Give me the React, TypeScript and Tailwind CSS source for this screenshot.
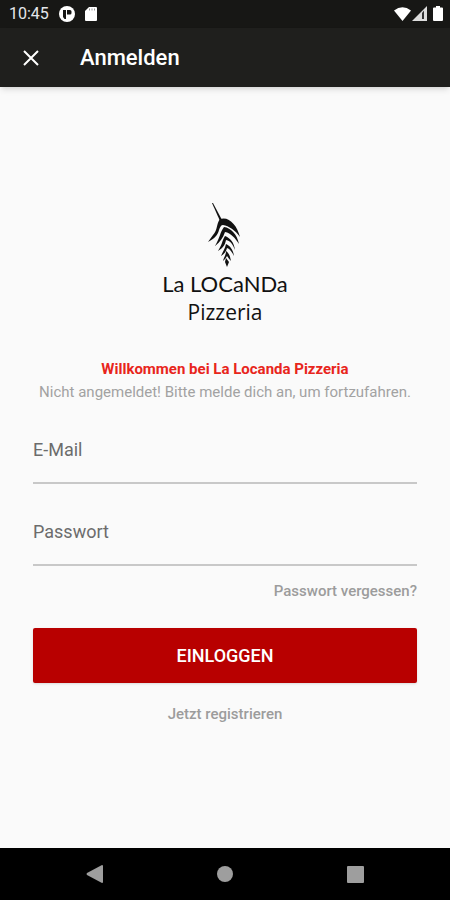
import React, { useState } from 'react';

const StatusBar: React.FC = () => (
    <div className="flex h-7 items-center justify-between bg-[#171715] pl-[9px] pr-[7px] text-white">
        <div className="flex items-center">
            <span className="text-base leading-5 text-gray-200">10:45</span>
            <svg className="ml-[10px] size-4" viewBox="0 0 16 16" aria-hidden="true">
                <circle cx="8" cy="8" r="8" fill="#fff" />
                <path d="M4 4h3v9H5.500L4 11zM8 4h3a1.500 1.500 0 0 1 1.500 1.500V7A1.500 1.500 0 0 1 11 8.500H8z" fill="#171715" />
            </svg>
            <svg className="ml-[10px] h-4 w-3" viewBox="0 0 12 16" aria-hidden="true">
                <path d="M4 1h7a1 1 0 0 1 1 1v12a1 1 0 0 1-1 1H1a1 1 0 0 1-1-1V5z" fill="#fff" />
                <path d="M4.500 2.500v2M7 2.500v2M9.500 2.500v2" stroke="#999" />
            </svg>
        </div>
        <div className="flex items-center">
            <svg className="h-4 w-[17px]" viewBox="0 0 17 16" aria-hidden="true">
                <path d="M0 4.500Q8.500-2 17 4.500L8.500 15z" fill="#fff" />
            </svg>
            <svg className="ml-px h-4 w-[15px]" viewBox="0 0 15 16" aria-hidden="true">
                <path d="M0 15 15 0v15z" fill="#ddd" />
                <path d="M10 7v6h2V4.500z" fill="#333" />
            </svg>
            <svg className="ml-[6px] h-4 w-[10px]" viewBox="0 0 10 16" aria-hidden="true">
                <path d="M3 0h4v1.500h2a1 1 0 0 1 1 1V14a1 1 0 0 1-1 1H1a1 1 0 0 1-1-1V2.500a1 1 0 0 1 1-1h2z" fill="#fff" />
            </svg>
        </div>
    </div>
);

const Logo: React.FC = () => (
    <div className="flex flex-col items-center text-[#111]">
        <svg className="h-[66px] w-[34px]" viewBox="0 0 34 66" aria-hidden="true" fill="currentColor">
            <path d="M4 1h1l9 17-2 1z" />
            <path d="M12 17C8 22 10 28 5 33l-5 7c6-3 10-7 11-12 1-3 2-5 4-5 6 1 12 5 17 12C29 23 21 14 12 17z" />
            <path d="M16 25c-4 5-4 11-9 19 5-4 8-8 10-14 6 1 10 6 14 12-2-10-8-16-15-17z" />
            <path d="M17 34c-3 5-3 9-7 15 5-3 7-6 8-11 5 1 7 5 9 10-1-8-5-12-10-14z" />
            <path d="M18 42c-1 5-3 7-5 12 3-2 5-4 6-8 3 1 5 4 7 8-1-7-4-10-8-12z" />
            <path d="M18 49c0 4-2 6-3 10 2-2 3-3 4-5 1 1 2 3 4 5-1-5-2-8-5-10zM18 56l-1 4 2 5 2-5z" />
        </svg>
        <h1 className="font-[Lato,sans-serif] text-[22px] leading-8">La LOCaNDa</h1>
        <p className="font-['Open_Sans',sans-serif] text-[21px] leading-6">Pizzeria</p>
    </div>
);

interface FieldProps {
    id: string;
    type: string;
    label: string;
    autoComplete: string;
}

const Field: React.FC<FieldProps> = ({ id, type, label, autoComplete }) => {
    const [value, setValue] = useState('');

    return (
        <div className="flex flex-col">
            <label htmlFor={id} className="text-lg leading-6 text-[#6c6c6c]">{label}</label>
            <input
                id={id}
                type={type}
                value={value}
                autoComplete={autoComplete}
                onChange={(e) => setValue(e.target.value)}
                className="h-[22px] w-full border-b-2 border-[#c8c8c8] bg-transparent text-base text-gray-900 outline-none"
            />
        </div>
    );
};

const App: React.FC = () => {
    const handleSubmit = (e: React.FormEvent) => {
        e.preventDefault();
    };

    return (
        <div className="flex min-h-screen flex-col bg-[#fafafa] font-[Roboto,sans-serif]">
            <StatusBar />
            <header className="z-10 flex h-[59px] items-center bg-[#1f1f1d] px-5 text-white shadow-md">
                <button type="button" aria-label="Schließen" className="flex size-[22px] items-center justify-center">
                    <svg className="size-4" viewBox="0 0 16 16" fill="none" stroke="currentColor" strokeWidth="2">
                        <path d="m1 1 14 14M15 1 1 15" />
                    </svg>
                </button>
                <h2 className="ml-[38px] text-[22px] leading-7 font-medium">Anmelden</h2>
            </header>

            <main className="flex flex-1 flex-col px-[33px] pt-[115px]">
                <Logo />
                <div className="mt-[34px] text-center text-[15px] leading-[23px]">
                    <p className="font-bold text-[#e8251c]">Willkommen bei La Locanda Pizzeria</p>
                    <p className="whitespace-nowrap text-[#a2a2a2]">Nicht angemeldet! Bitte melde dich an, um fortzufahren.</p>
                </div>

                <form onSubmit={handleSubmit} className="mt-[34px] flex flex-col">
                    <div className="flex flex-col gap-9">
                        <Field id="email" type="email" label="E-Mail" autoComplete="email" />
                        <Field id="password" type="password" label="Passwort" autoComplete="current-password" />
                    </div>
                    <a href="#" className="mt-[14px] self-end text-[15px] leading-[22px] font-medium text-[#9c9c9c]">Passwort vergessen?</a>
                    <button type="submit" className="mt-[26px] h-[55px] rounded-xs bg-[#b80000] text-lg font-medium text-white shadow">
                        EINLOGGEN
                    </button>
                </form>
                <a href="#" className="mt-5 self-center text-[15px] leading-[22px] font-medium text-[#9c9c9c]">Jetzt registrieren</a>
            </main>

            <nav className="flex h-[52px] items-center justify-center bg-black text-[#9e9e9e]">
                <button type="button" aria-label="Zurück" className="flex w-[130px] justify-center">
                    <svg className="size-[18px]" viewBox="0 0 18 18" fill="currentColor">
                        <path d="M16 0q1 0 1 1v16q0 1-1 1L1 10q-1-1 0-2z" />
                    </svg>
                </button>
                <button type="button" aria-label="Startseite" className="flex w-[130px] justify-center">
                    <svg className="size-[18px]" viewBox="0 0 18 18" fill="currentColor">
                        <circle cx="9" cy="9" r="8" />
                    </svg>
                </button>
                <button type="button" aria-label="Übersicht" className="flex w-[130px] justify-center">
                    <svg className="size-[18px]" viewBox="0 0 18 18" fill="currentColor">
                        <rect x="1" y="1" width="17" height="17" rx="1" />
                    </svg>
                </button>
            </nav>
        </div>
    );
};

export default App;
